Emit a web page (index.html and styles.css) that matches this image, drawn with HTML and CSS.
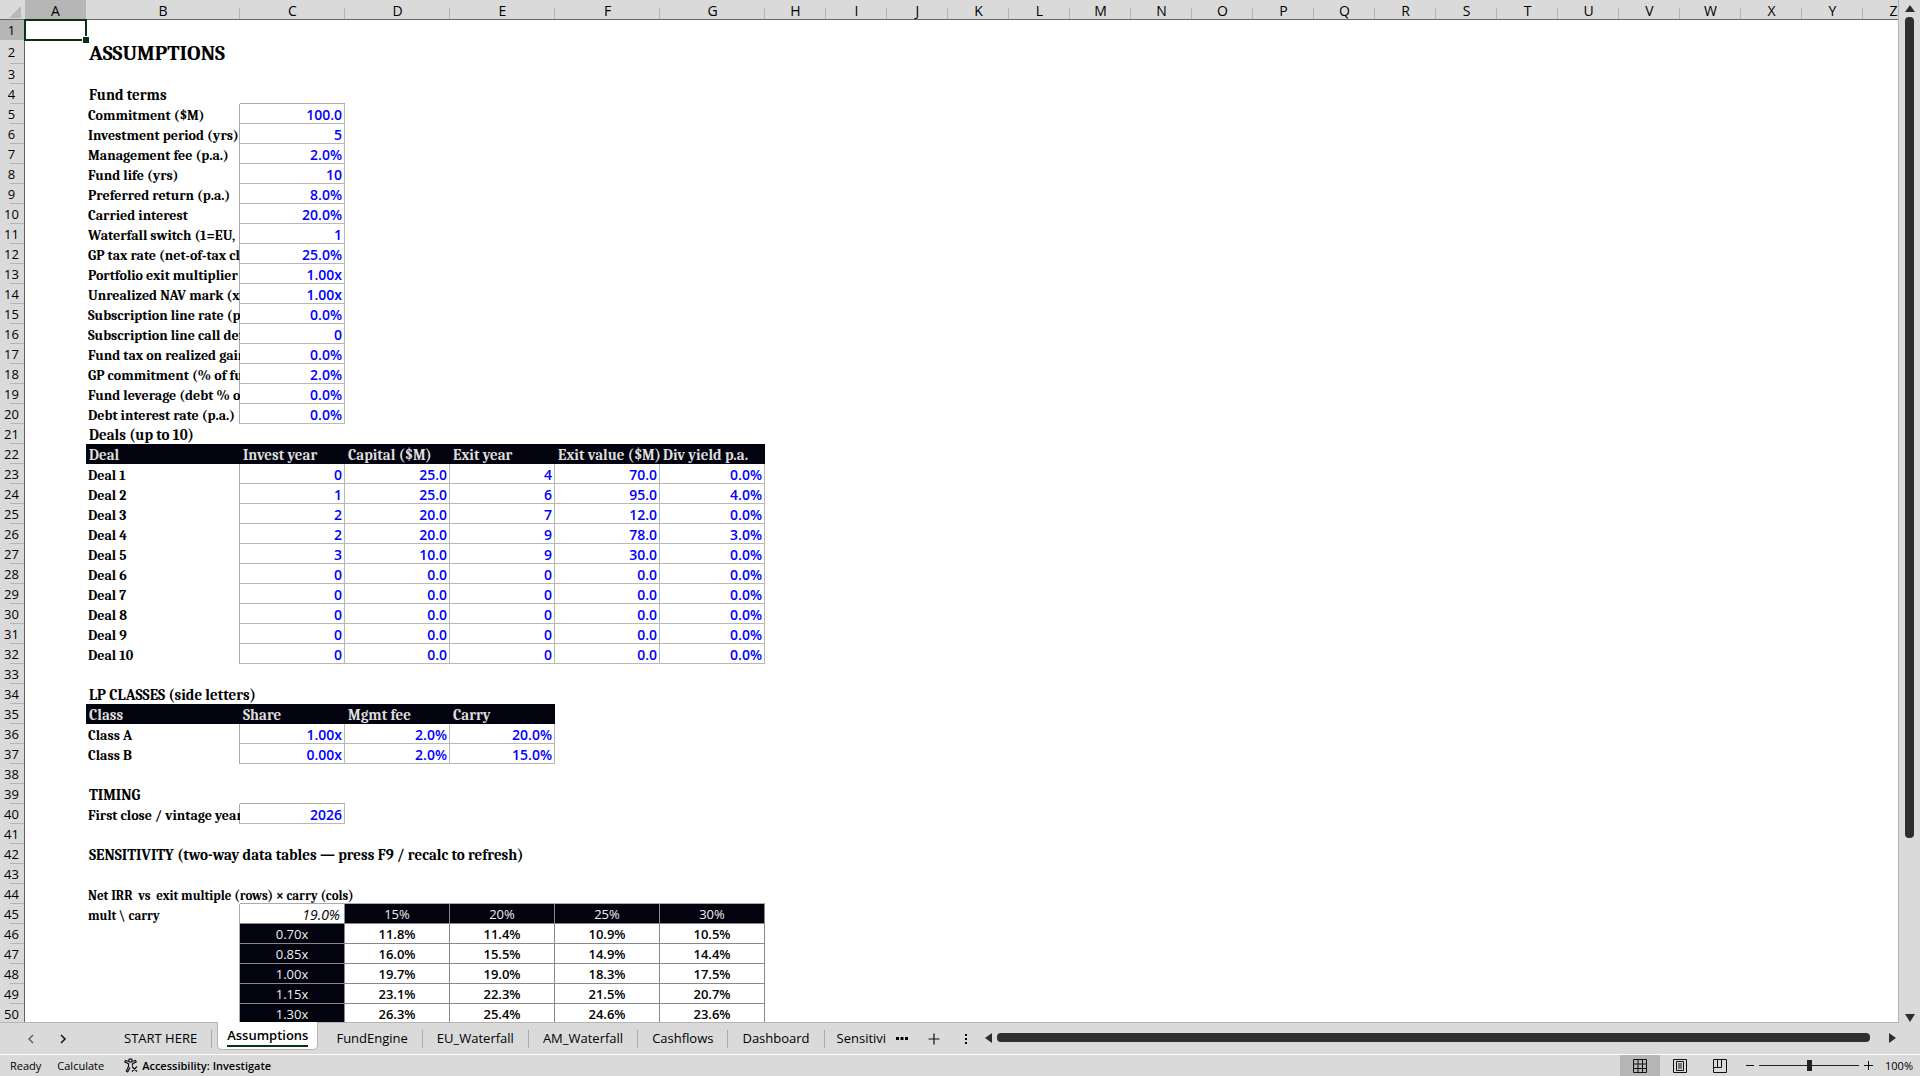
FILE: index.html
```
<!DOCTYPE html>
<html lang="en">
<head>
  <meta charset="UTF-8">
  <title>Assumptions</title>
  <link rel="stylesheet" href="styles.css">
</head>
<body>
  <div class="workspace">
    <div class="grid-area">
      <table class="sheet">
        <colgroup>
          <col class="col-num"><col class="col-a"><col class="col-b">
          <col class="col-wide" span="5"><col class="col-std" span="19">
        </colgroup>
        <thead>
          <tr>
            <th class="corner"><svg width="12" height="12" viewBox="0 0 12 12"><path d="M12 0v12H0z" fill="#b8b8b8"/></svg></th>
            <th class="active">A</th><th>B</th><th>C</th><th>D</th><th>E</th><th>F</th><th>G</th><th>H</th><th>I</th><th>J</th><th>K</th><th>L</th><th>M</th><th>N</th><th>O</th><th>P</th><th>Q</th><th>R</th><th>S</th><th>T</th><th>U</th><th>V</th><th>W</th><th>X</th><th>Y</th><th>Z</th>
          </tr>
        </thead>
        <tbody>
          <tr><th class="active">1</th><td class="selected"></td></tr>
          <tr class="title-row"><th>2</th><td></td><td class="title">ASSUMPTIONS</td></tr>
          <tr><th>3</th></tr>
          <tr><th>4</th><td></td><td class="section">Fund terms</td></tr>
          <tr><th>5</th><td></td><td class="label">Commitment ($M)</td><td class="input first top">100.0</td></tr>
          <tr><th>6</th><td></td><td class="label">Investment period (yrs)</td><td class="input first">5</td></tr>
          <tr><th>7</th><td></td><td class="label">Management fee (p.a.)</td><td class="input first">2.0%</td></tr>
          <tr><th>8</th><td></td><td class="label">Fund life (yrs)</td><td class="input first">10</td></tr>
          <tr><th>9</th><td></td><td class="label">Preferred return (p.a.)</td><td class="input first">8.0%</td></tr>
          <tr><th>10</th><td></td><td class="label">Carried interest</td><td class="input first">20.0%</td></tr>
          <tr><th>11</th><td></td><td class="label">Waterfall switch (1=EU,</td><td class="input first">1</td></tr>
          <tr><th>12</th><td></td><td class="label">GP tax rate (net-of-tax cl</td><td class="input first">25.0%</td></tr>
          <tr><th>13</th><td></td><td class="label">Portfolio exit multiplier</td><td class="input first">1.00x</td></tr>
          <tr><th>14</th><td></td><td class="label">Unrealized NAV mark (x</td><td class="input first">1.00x</td></tr>
          <tr><th>15</th><td></td><td class="label">Subscription line rate (p.</td><td class="input first">0.0%</td></tr>
          <tr><th>16</th><td></td><td class="label">Subscription line call def</td><td class="input first">0</td></tr>
          <tr><th>17</th><td></td><td class="label">Fund tax on realized gain</td><td class="input first">0.0%</td></tr>
          <tr><th>18</th><td></td><td class="label">GP commitment (% of fu</td><td class="input first">2.0%</td></tr>
          <tr><th>19</th><td></td><td class="label">Fund leverage (debt % o</td><td class="input first">0.0%</td></tr>
          <tr><th>20</th><td></td><td class="label">Debt interest rate (p.a.)</td><td class="input first">0.0%</td></tr>
          <tr><th>21</th><td></td><td class="section">Deals (up to 10)</td></tr>
          <tr><th>22</th><td></td><td class="head">Deal</td><td class="head">Invest year</td><td class="head">Capital ($M)</td><td class="head">Exit year</td><td class="head">Exit value ($M)</td><td class="head">Div yield p.a.</td></tr>
          <tr><th>23</th><td></td><td class="label">Deal 1</td><td class="input first">0</td><td class="input">25.0</td><td class="input">4</td><td class="input">70.0</td><td class="input">0.0%</td></tr>
          <tr><th>24</th><td></td><td class="label">Deal 2</td><td class="input first">1</td><td class="input">25.0</td><td class="input">6</td><td class="input">95.0</td><td class="input">4.0%</td></tr>
          <tr><th>25</th><td></td><td class="label">Deal 3</td><td class="input first">2</td><td class="input">20.0</td><td class="input">7</td><td class="input">12.0</td><td class="input">0.0%</td></tr>
          <tr><th>26</th><td></td><td class="label">Deal 4</td><td class="input first">2</td><td class="input">20.0</td><td class="input">9</td><td class="input">78.0</td><td class="input">3.0%</td></tr>
          <tr><th>27</th><td></td><td class="label">Deal 5</td><td class="input first">3</td><td class="input">10.0</td><td class="input">9</td><td class="input">30.0</td><td class="input">0.0%</td></tr>
          <tr><th>28</th><td></td><td class="label">Deal 6</td><td class="input first">0</td><td class="input">0.0</td><td class="input">0</td><td class="input">0.0</td><td class="input">0.0%</td></tr>
          <tr><th>29</th><td></td><td class="label">Deal 7</td><td class="input first">0</td><td class="input">0.0</td><td class="input">0</td><td class="input">0.0</td><td class="input">0.0%</td></tr>
          <tr><th>30</th><td></td><td class="label">Deal 8</td><td class="input first">0</td><td class="input">0.0</td><td class="input">0</td><td class="input">0.0</td><td class="input">0.0%</td></tr>
          <tr><th>31</th><td></td><td class="label">Deal 9</td><td class="input first">0</td><td class="input">0.0</td><td class="input">0</td><td class="input">0.0</td><td class="input">0.0%</td></tr>
          <tr><th>32</th><td></td><td class="label">Deal 10</td><td class="input first">0</td><td class="input">0.0</td><td class="input">0</td><td class="input">0.0</td><td class="input">0.0%</td></tr>
          <tr><th>33</th></tr>
          <tr><th>34</th><td></td><td class="section">LP CLASSES (side letters)</td></tr>
          <tr><th>35</th><td></td><td class="head">Class</td><td class="head">Share</td><td class="head">Mgmt fee</td><td class="head">Carry</td></tr>
          <tr><th>36</th><td></td><td class="label">Class A</td><td class="input first">1.00x</td><td class="input">2.0%</td><td class="input">20.0%</td></tr>
          <tr><th>37</th><td></td><td class="label">Class B</td><td class="input first">0.00x</td><td class="input">2.0%</td><td class="input">15.0%</td></tr>
          <tr><th>38</th></tr>
          <tr><th>39</th><td></td><td class="section">TIMING</td></tr>
          <tr><th>40</th><td></td><td class="label">First close / vintage year</td><td class="input first top">2026</td></tr>
          <tr><th>41</th></tr>
          <tr><th>42</th><td></td><td class="section">SENSITIVITY (two-way data tables — press F9 / recalc to refresh)</td></tr>
          <tr><th>43</th></tr>
          <tr><th>44</th><td></td><td class="note">Net IRR&nbsp; vs&nbsp; exit multiple (rows) × carry (cols)</td></tr>
          <tr><th>45</th><td></td><td class="note">mult \ carry</td><td class="result first top base">19.0%</td><td class="axis top">15%</td><td class="axis top">20%</td><td class="axis top">25%</td><td class="axis top">30%</td></tr>
          <tr><th>46</th><td></td><td></td><td class="axis first">0.70x</td><td class="result">11.8%</td><td class="result">11.4%</td><td class="result">10.9%</td><td class="result">10.5%</td></tr>
          <tr><th>47</th><td></td><td></td><td class="axis first">0.85x</td><td class="result">16.0%</td><td class="result">15.5%</td><td class="result">14.9%</td><td class="result">14.4%</td></tr>
          <tr><th>48</th><td></td><td></td><td class="axis first">1.00x</td><td class="result">19.7%</td><td class="result">19.0%</td><td class="result">18.3%</td><td class="result">17.5%</td></tr>
          <tr><th>49</th><td></td><td></td><td class="axis first">1.15x</td><td class="result">23.1%</td><td class="result">22.3%</td><td class="result">21.5%</td><td class="result">20.7%</td></tr>
          <tr><th>50</th><td></td><td></td><td class="axis first">1.30x</td><td class="result">26.3%</td><td class="result">25.4%</td><td class="result">24.6%</td><td class="result">23.6%</td></tr>
        </tbody>
      </table>
    </div>
    <div class="vscroll">
      <button class="arrow" aria-label="Scroll up"><svg width="10" height="8" viewBox="0 0 10 8"><path d="M5 0l5 7H0z"/></svg></button>
      <div class="vtrack"><div class="vthumb"></div></div>
      <button class="arrow" aria-label="Scroll down"><svg width="10" height="8" viewBox="0 0 10 8"><path d="M0 0h10L5 8z"/></svg></button>
    </div>
  </div>

  <div class="tabbar">
    <div class="tab-nav">
      <button aria-label="Previous sheet"><svg width="8" height="10" viewBox="0 0 8 10"><path d="M6 1L2 5l4 4" fill="none" stroke="#555" stroke-width="1.3"/></svg></button>
      <button aria-label="Next sheet"><svg width="8" height="10" viewBox="0 0 8 10"><path d="M2 1l4 4-4 4" fill="none" stroke="#111" stroke-width="1.5"/></svg></button>
    </div>
    <nav class="tabs">
      <a href="#">START HERE</a>
      <a href="#" class="current"><span>Assumptions</span></a>
      <a href="#">FundEngine</a>
      <a href="#">EU_Waterfall</a>
      <a href="#">AM_Waterfall</a>
      <a href="#">Cashflows</a>
      <a href="#">Dashboard</a>
      <a href="#">Sensitivi</a>
    </nav>
    <div class="tab-tools">
      <button aria-label="More sheets"><svg width="12" height="12" viewBox="0 0 12 12"><path d="M0 4h3v3H0zM4.500 4h3v3h-3zM9 4h3v3H9z"/></svg></button>
      <button aria-label="New sheet"><svg width="12" height="12" viewBox="0 0 12 12"><path d="M6 .5v11M.5 6h11" stroke="#111" stroke-width="1.2"/></svg></button>
      <button aria-label="Resize tab bar"><svg width="12" height="12" viewBox="0 0 12 12"><path d="M5 1h2v2H5zM5 5h2v2H5zM5 9h2v2H5z"/></svg></button>
    </div>
    <div class="hscroll">
      <button class="arrow" aria-label="Scroll left"><svg width="7" height="10" viewBox="0 0 7 10"><path d="M7 0v10L0 5z"/></svg></button>
      <div class="htrack"><div class="hthumb"></div></div>
      <button class="arrow" aria-label="Scroll right"><svg width="7" height="10" viewBox="0 0 7 10"><path d="M0 0l7 5-7 5z"/></svg></button>
    </div>
  </div>

  <footer class="statusbar">
    <span class="status">Ready</span>
    <span class="status">Calculate</span>
    <button class="access">
      <svg width="14" height="15" viewBox="0 0 14 15" fill="none" stroke="#111" stroke-width="1.2"><circle cx="6.500" cy="2.500" r="1.700"/><path d="M4.800 3.500L1.500 2.500.8 4l3.700 1.700v2.800L2.300 13l1.400.8L6 9.500M8.300 3.500l3.200-1 .7 1.500-3.700 1.700v2M8 8.500l5 5M13 8.500l-5 5"/></svg>
      Accessibility: Investigate
    </button>
    <div class="views">
      <button class="view on" aria-label="Normal"><svg width="14" height="14" viewBox="0 0 14 14"><path d="M.5.5h13v13H.5zM5 .5v13M9.500.5v13M.5 5h13M.5 9.500h13"/></svg></button>
      <button class="view" aria-label="Page layout"><svg width="14" height="14" viewBox="0 0 14 14"><path d="M.5.5h13v13H.5zM3.500 2.500h7v9h-7zM5 5h4M5 7h4M5 9h4"/></svg></button>
      <button class="view" aria-label="Page break preview"><svg width="14" height="14" viewBox="0 0 14 14"><path d="M.5.5h13v13H.5zM.5 8.500h8v-8M4.500.5v8"/></svg></button>
    </div>
    <div class="zoom">
      <button aria-label="Zoom out"><svg width="8" height="8" viewBox="0 0 8 8"><path d="M0 3.500h8" stroke="#111"/></svg></button>
      <input type="range" min="0" max="200" value="100" aria-label="Zoom">
      <button aria-label="Zoom in"><svg width="9" height="9" viewBox="0 0 9 9"><path d="M0 4.500h9M4.500 0v9" stroke="#111"/></svg></button>
      <span class="percent">100%</span>
    </div>
  </footer>
</body>
</html>
```

FILE: styles.css
```
* {
  box-sizing: border-box;
}

body {
  margin: 0;
  height: 100vh;
  display: flex;
  flex-direction: column;
  overflow: hidden;
  background: #dadada;
  color: #111;
  font-family: "Open Sans", "Noto Sans", sans-serif;
  font-size: 13px;
}

button {
  display: flex;
  align-items: center;
  justify-content: center;
  padding: 0;
  border: none;
  background: none;
  color: inherit;
  font: inherit;
}

/* Grid */
.workspace {
  flex: 1;
  min-height: 0;
  display: flex;
}

.grid-area {
  flex: 1;
  min-width: 0;
  overflow: hidden;
  background: #fff;
  border-right: 1px solid #b4b4b4;
  border-bottom: 1px solid #b4b4b4;
}

.sheet {
  width: 1924px; /* sum of the columns */
  table-layout: fixed;
  border-collapse: separate;
  border-spacing: 0;
}

.col-num { width: 25px; }
.col-a { width: 61px; }
.col-b { width: 154px; }
.col-wide { width: 105px; }
.col-std { width: 61px; }

.sheet tr {
  height: 20px;
}

.sheet .title-row {
  height: 24px;
}

.sheet th,
.sheet td {
  padding: 2px 0 0;
  line-height: 17px;
  white-space: nowrap;
}

.sheet th {
  padding-top: 1px;
  background: #dadada;
  color: #000;
  font-size: 14px;
  font-weight: 400;
}

.sheet thead th {
  border-bottom: 1px solid #666;
  background: linear-gradient(#b4b4b4, #b4b4b4) right bottom / 1px 11px no-repeat #dadada;
}

.sheet tbody th {
  border-right: 1px solid #666;
  background: linear-gradient(#b4b4b4, #b4b4b4) right bottom / 14px 1px no-repeat #dadada;
  padding-right: 1px;
  font-size: 13px;
}

.sheet th.active {
  background: #b6b6b6;
}

.sheet thead .corner {
  padding: 0;
  background: #dadada;
}

.corner svg {
  display: block;
  margin: 4px 0 0 9px;
}

.sheet .selected {
  position: relative;
  outline: 2px solid #0a3314;
  outline-offset: -1px;
}

.selected::after {
  content: "";
  position: absolute;
  right: -3px;
  bottom: -3px;
  width: 6px;
  height: 6px;
  background: #0a3314;
  border: 1px solid #fff;
  border-width: 1px 0 0 1px;
}

.title,
.section,
.label,
.head,
.note {
  font-family: Cambria, Caladea, "Noto Serif", "Liberation Serif", serif;
  font-weight: 700;
  color: #000;
}

.sheet .title {
  padding-left: 3px;
  font-size: 21px;
  line-height: 21px;
}

.sheet .section {
  padding-left: 3px;
  font-size: 15px;
}

.sheet .label {
  padding-left: 2px;
  font-size: 14px;
  overflow: hidden;
}

.sheet .note {
  padding-left: 2px;
  font-size: 13px;
}

.sheet .head {
  padding-left: 3px;
  overflow: hidden;
  background: #03030f;
  color: #ddd;
  font-size: 15px;
}

.sheet .input {
  padding-right: 2px;
  border-right: 1px solid #b8b8b8;
  border-bottom: 1px solid #b8b8b8;
  color: #00f;
  font-size: 14px;
  font-weight: 600;
  text-align: right;
}

.sheet .result,
.sheet .axis {
  border-right: 1px solid #888;
  border-bottom: 1px solid #888;
  color: #000;
  font-weight: 600;
  text-align: center;
}

.sheet .axis {
  background: #03030f;
  color: #eee;
  font-weight: 400;
}

.sheet .base {
  padding-right: 4px;
  font-size: 14px;
  font-style: italic;
  font-weight: 400;
  text-align: right;
}

.sheet .first {
  box-shadow: -1px 0 #aaa;
}

.sheet .top {
  box-shadow: 0 -1px #aaa;
}

.sheet .first.top {
  box-shadow: -1px 0 #aaa, 0 -1px #aaa;
}

/* Scroll bars */
.arrow svg {
  display: block;
  fill: #2e2e2e;
}

.vscroll {
  width: 21px;
  padding: 5px 0 1px;
  display: flex;
  flex-direction: column;
  align-items: center;
  gap: 4px;
}

.vtrack {
  flex: 1;
}

.vthumb {
  width: 9px;
  height: calc(83% - 3px);
  border-radius: 4px;
  background: #2e2e2e;
}

.hscroll {
  flex: 1;
  display: flex;
  align-items: center;
  gap: 5px;
  padding: 0 24px 2px 3px;
}

.htrack {
  flex: 1;
  padding-right: 14px;
}

.hthumb {
  height: 9px;
  border-radius: 4px;
  background: #2e2e2e;
}

/* Sheet tabs */
.tabbar {
  display: flex;
  height: 32px;
  border-bottom: 1px solid #fff;
}

.tab-nav {
  display: flex;
  width: 110px;
  padding-left: 15px;
}

.tab-nav button {
  width: 32px;
}

.tabs {
  display: flex;
}

.tabs a {
  position: relative;
  padding: 0 15px 0 14px;
  color: #000;
  font-size: 13px;
  line-height: 31px;
  text-decoration: none;
}

.tabs a::after {
  content: "";
  position: absolute;
  right: 0;
  top: 7px;
  width: 1px;
  height: 18px;
  background: #aaa;
}

.tabs a:last-child {
  padding: 0 0 0 12px;
}

.tabs a:last-child::after,
.tabs .current::after {
  display: none;
}

.tabs .current {
  height: 28px;
  margin: -1px 4px 0 5px;
  padding: 0 9px;
  border: 1px solid #b4b4b4;
  border-top: none;
  border-radius: 0 0 5px 5px;
  background: #fff;
  font-weight: 600;
  line-height: 20px;
}

.current span {
  display: block;
  padding-top: 3px;
  border-bottom: 2px solid #0a3314;
}

.tab-tools {
  display: flex;
}

.tab-tools button {
  width: 32px;
}

/* Status bar */
.statusbar {
  display: flex;
  align-items: center;
  height: 21px;
  padding-left: 10px;
  font-size: 11px;
  color: #000;
}

.status {
  margin-right: 16px;
}

.access {
  gap: 4px;
  margin-left: 4px;
  font-weight: 600;
}

.views {
  display: flex;
  margin-left: auto;
}

.view {
  width: 40px;
  height: 21px;
}

.view.on {
  background: #b6b6b6;
}

.view svg {
  fill: none;
  stroke: #111;
}

.zoom {
  display: flex;
  align-items: center;
  gap: 5px;
  padding: 0 7px 0 6px;
}

.zoom input {
  appearance: none;
  width: 100px;
  height: 12px;
  margin: 0;
  background: linear-gradient(#222, #222) center / 100% 1px no-repeat;
}

.zoom input::-webkit-slider-thumb {
  appearance: none;
  width: 5px;
  height: 11px;
  background: #222;
}

.percent {
  margin-left: 7px;
}
```
